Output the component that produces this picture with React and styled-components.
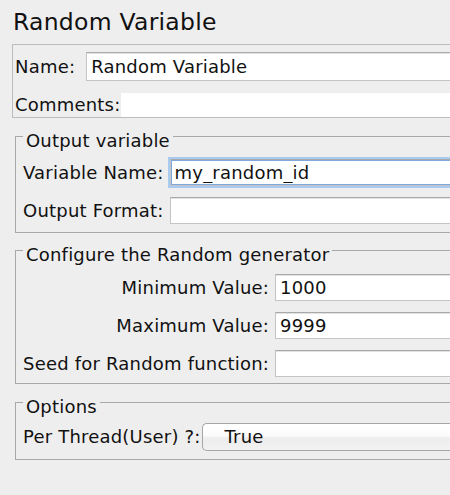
import React from "react";
import styled, { createGlobalStyle } from "styled-components";

const GlobalStyle = createGlobalStyle`
  html, body {
    margin: 0;
    padding: 0;
    background: #eeeeee;
    overflow: hidden;
  }
  body {
    font-family: "DejaVu Sans", "Liberation Sans", sans-serif;
    font-size: 18px;
    letter-spacing: 0.2px;
    color: #111111;
  }
`;

const Page = styled.div`
  width: 480px;
  height: 495px;
  background: #eeeeee;
  display: flex;
  flex-direction: column;
`;

const Title = styled.h1`
  margin: 0;
  padding: 8px 0 0 13px;
  font-size: 23.5px;
  font-weight: normal;
  letter-spacing: 0.25px;
  line-height: 28px;
  color: #111111;
`;

const NamePanel = styled.div`
  margin: 8px 0 0 12px;
  border: 1px solid #bcbcbc;
  border-right: none;
  padding: 7px 0 0 2px;
  display: flex;
  flex-direction: column;
  gap: 12px;
`;

const Row = styled.div`
  display: flex;
  align-items: center;
  gap: ${(p) => p.$gap || 0}px;
`;

const Label = styled.label`
  line-height: 20px;
  white-space: nowrap;
  text-align: ${(p) => (p.$right ? "right" : "left")};
`;

const Field = styled.input`
  flex: 1;
  min-width: 0;
  box-sizing: border-box;
  height: ${(p) => p.$h || 27}px;
  margin: 0;
  padding: 0 0 0 4px;
  font: inherit;
  letter-spacing: inherit;
  color: #111111;
  background: #ffffff;
  border: 1px solid #c4c4c4;
  border-top-color: #a9a9a9;
  border-right: none;
  outline: none;
  box-shadow: ${(p) =>
    p.$focused ? "0 0 0 2px #a9cbef, inset 0 0 0 1px #7fa9dc" : "inset 0 1px 0 #e2e2e2"};
`;

const CommentArea = styled.div`
  flex: 1;
  height: 24px;
  background: #ffffff;
`;

const Group = styled.fieldset`
  margin: ${(p) => p.$top || 2}px 0 0 15px;
  padding: ${(p) => p.$pt || 8}px 0 ${(p) => p.$pb || 8}px 7px;
  border: 1px solid #a8a8a8;
  border-right: none;
  min-width: 0;
`;

const Legend = styled.legend`
  padding: 10px 3px 0 3px;
  line-height: 20px;
`;

const FormGrid = styled.div`
  display: grid;
  grid-template-columns: auto 1fr;
  column-gap: 6px;
  row-gap: 11px;
  align-items: center;
`;

const Combo = styled.div`
  flex: 1;
  height: 28px;
  box-sizing: border-box;
  border: 1px solid #a6a6a6;
  border-right: none;
  border-radius: 5px 0 0 5px;
  background: linear-gradient(#ffffff, #fbfbfb 45%, #ededed 55%, #f2f2f2);
  display: flex;
  align-items: center;
  padding-left: 22px;
  line-height: 20px;
`;

export default function App() {
  return (
    <Page>
      <GlobalStyle />
      <Title>Random Variable</Title>
      <NamePanel>
        <Row $gap={11}>
          <Label>Name:</Label>
          <Field $h={29} defaultValue="Random Variable" />
        </Row>
        <Row $gap={1}>
          <Label>Comments:</Label>
          <CommentArea />
        </Row>
      </NamePanel>

      <Group $top={3} $pt={8} $pb={8}>
        <Legend>Output variable</Legend>
        <FormGrid>
          <Label $right>Variable Name:</Label>
          <Field $focused defaultValue="my_random_id" />
          <Label $right>Output Format:</Label>
          <Field defaultValue="" />
        </FormGrid>
      </Group>

      <Group $top={2} $pt={9} $pb={6}>
        <Legend>Configure the Random generator</Legend>
        <FormGrid>
          <Label $right>Minimum Value:</Label>
          <Field defaultValue="1000" />
          <Label $right>Maximum Value:</Label>
          <Field defaultValue="9999" />
          <Label $right>Seed for Random function:</Label>
          <Field defaultValue="" />
        </FormGrid>
      </Group>

      <Group $top={3} $pt={6} $pb={8}>
        <Legend>Options</Legend>
        <Row $gap={1}>
          <Label>Per Thread(User) ?:</Label>
          <Combo>True</Combo>
        </Row>
      </Group>
    </Page>
  );
}
